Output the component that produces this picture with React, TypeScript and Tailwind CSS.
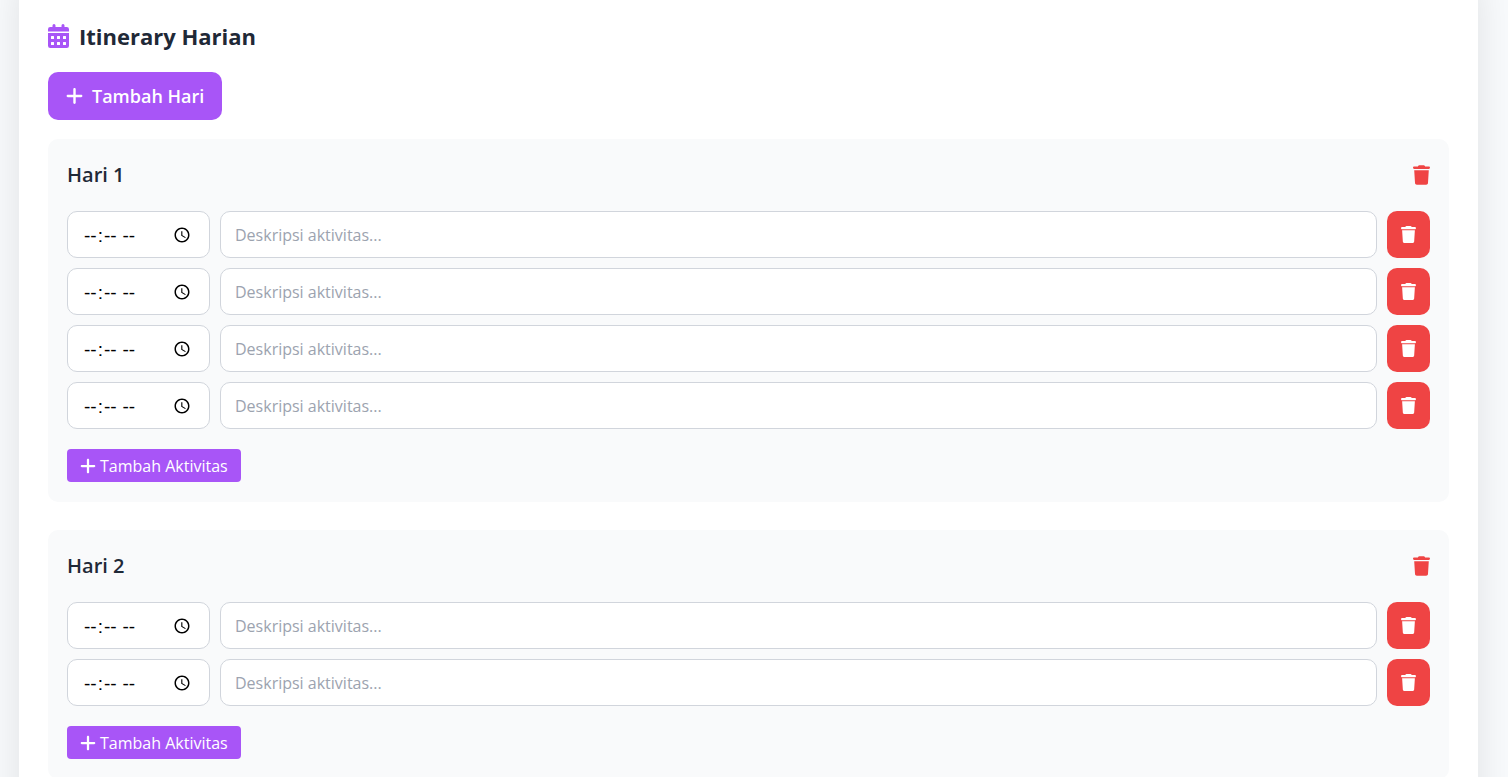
import { useState } from "react";
import { FaPlus, FaTrash } from "react-icons/fa6";

type Day = { id: number; activities: number[] };

const initialDays: Day[] = [
  { id: 1, activities: [1, 2, 3, 4] },
  { id: 2, activities: [1, 2] },
];

function CalendarIcon({ className }: { className?: string }) {
  return (
    <svg viewBox="0 0 448 512" fill="currentColor" aria-hidden="true" className={className}>
      <path
        fillRule="evenodd"
        d="M96 32a32 32 0 0 1 64 0v32h128V32a32 32 0 0 1 64 0v32h48a48 48 0 0 1 48 48v48H0v-48a48 48 0 0 1 48-48h48zM0 192h448v272a48 48 0 0 1-48 48H48a48 48 0 0 1-48-48zM64 264v48a8 8 0 0 0 8 8h48a8 8 0 0 0 8-8v-48a8 8 0 0 0-8-8H72a8 8 0 0 0-8 8zm128 0v48a8 8 0 0 0 8 8h48a8 8 0 0 0 8-8v-48a8 8 0 0 0-8-8h-48a8 8 0 0 0-8 8zm128 0v48a8 8 0 0 0 8 8h48a8 8 0 0 0 8-8v-48a8 8 0 0 0-8-8h-48a8 8 0 0 0-8 8zM64 392v48a8 8 0 0 0 8 8h48a8 8 0 0 0 8-8v-48a8 8 0 0 0-8-8H72a8 8 0 0 0-8 8zm128 0v48a8 8 0 0 0 8 8h48a8 8 0 0 0 8-8v-48a8 8 0 0 0-8-8h-48a8 8 0 0 0-8 8zm128 0v48a8 8 0 0 0 8 8h48a8 8 0 0 0 8-8v-48a8 8 0 0 0-8-8h-48a8 8 0 0 0-8 8z"
      />
    </svg>
  );
}

function ActivityRow({ label, onRemove }: { label: string; onRemove: () => void }) {
  return (
    <div className="flex h-[47px] gap-[10px]">
      <input
        type="time"
        aria-label={`Waktu ${label}`}
        className="w-[143px] rounded-[10px] border border-gray-300 bg-white px-[15px] font-['Liberation_Sans',sans-serif] text-[19px] text-black [&::-webkit-calendar-picker-indicator]:h-[18px] [&::-webkit-calendar-picker-indicator]:w-[18px] [&::-webkit-datetime-edit]:pt-1"
      />
      <input
        type="text"
        aria-label={`Deskripsi ${label}`}
        placeholder="Deskripsi aktivitas..."
        className="min-w-0 flex-1 rounded-[10px] border border-gray-300 bg-white px-[14px] text-base text-gray-800 placeholder:text-[#9ca3af]"
      />
      <button
        type="button"
        aria-label={`Hapus ${label}`}
        onClick={onRemove}
        className="flex w-[43px] items-center justify-center rounded-[10px] bg-[#ef4444] text-white"
      >
        <FaTrash className="h-[17px] w-[15px]" />
      </button>
    </div>
  );
}

export default function App() {
  const [days, setDays] = useState<Day[]>(initialDays);

  const addDay = () =>
    setDays((d) => [...d, { id: Math.max(0, ...d.map((x) => x.id)) + 1, activities: [1] }]);
  const removeDay = (id: number) => setDays((d) => d.filter((x) => x.id !== id));
  const addActivity = (id: number) =>
    setDays((d) =>
      d.map((x) =>
        x.id === id ? { ...x, activities: [...x.activities, Math.max(0, ...x.activities) + 1] } : x
      )
    );
  const removeActivity = (id: number, activity: number) =>
    setDays((d) =>
      d.map((x) => (x.id === id ? { ...x, activities: x.activities.filter((a) => a !== activity) } : x))
    );

  return (
    <div className="min-h-screen overflow-hidden bg-[#f8fafc] pr-[30px] pl-[19px] font-['Segoe_UI','Open_Sans',sans-serif] text-[#1f2937]">
      <main className="-mt-16 min-h-screen bg-white px-[29px] pt-[84px] pb-[29px] shadow-[0_44px_36px_rgba(0,0,0,0.1)]">
        <h2 className="flex h-8 items-center gap-[10px] text-[22px] font-bold">
          <CalendarIcon className="h-6 w-[21px] text-[#a855f7]" />
          Itinerary Harian
        </h2>
        <button
          type="button"
          onClick={addDay}
          className="mt-[20px] flex h-12 items-center gap-[9px] rounded-[10px] bg-[#a855f7] px-[18px] text-lg font-semibold text-white"
        >
          <FaPlus className="h-5 w-[17px]" />
          Tambah Hari
        </button>

        <div className="mt-[19px] flex flex-col gap-[28px]">
          {days.map((day, index) => (
            <section key={day.id} className="rounded-[10px] bg-gray-50 px-[19px] pt-[19px] pb-[20px]">
              <div className="flex h-[34px] items-center justify-between">
                <h3 className="text-xl font-semibold">Hari {index + 1}</h3>
                <button
                  type="button"
                  aria-label={`Hapus hari ${index + 1}`}
                  onClick={() => removeDay(day.id)}
                  className="text-[#ef4444]"
                >
                  <FaTrash className="h-5 w-[17px]" />
                </button>
              </div>
              <div className="mt-[19px] flex flex-col gap-[10px]">
                {day.activities.map((activity) => (
                  <ActivityRow
                    key={activity}
                    label={`aktivitas ${activity} hari ${index + 1}`}
                    onRemove={() => removeActivity(day.id, activity)}
                  />
                ))}
              </div>
              <button
                type="button"
                onClick={() => addActivity(day.id)}
                className="mt-[20px] flex h-[33px] items-center gap-1 rounded bg-[#a855f7] px-[13px] text-base text-white"
              >
                <FaPlus className="h-[18px] w-4" />
                Tambah Aktivitas
              </button>
            </section>
          ))}
        </div>
      </main>
    </div>
  );
}
